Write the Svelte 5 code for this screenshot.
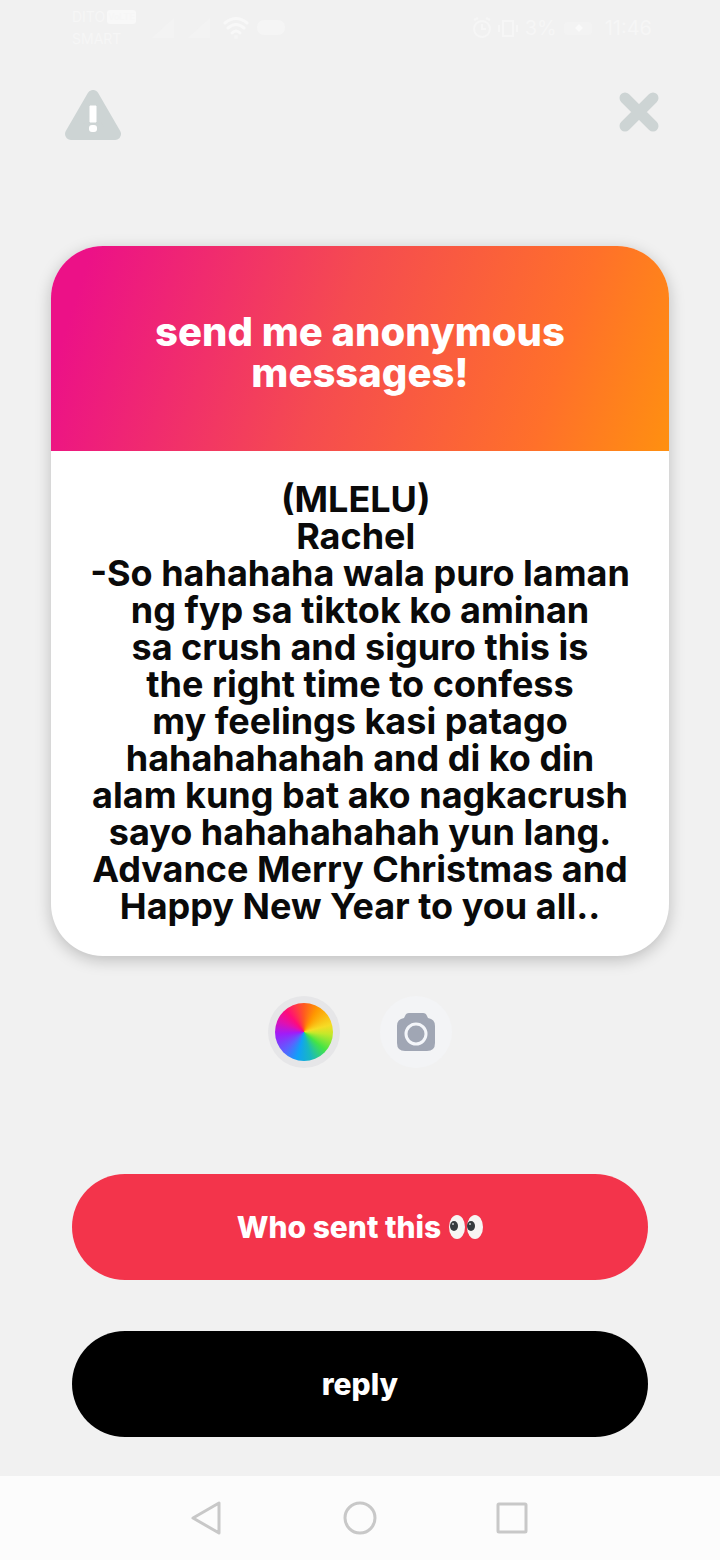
<script>
  const prompt = ['send me anonymous', 'messages!'];
  const message = [
    '(MLELU) ',
    'Rachel ',
    '-So hahahaha wala puro laman',
    'ng fyp sa tiktok ko aminan',
    'sa crush and siguro this is',
    'the right time to confess',
    'my feelings kasi patago',
    'hahahahahah and di ko din',
    'alam kung bat ako nagkacrush',
    'sayo hahahahahah yun lang.',
    'Advance Merry Christmas and',
    'Happy New Year to you all..'
  ];
</script>

<div class="screen">
  <div class="status">
    <div class="carrier">
      <div class="sim"><span>DITO</span><span class="volte">VoLTE</span></div>
      <span>SMART</span>
    </div>
    <svg class="signals" width="136" height="24" viewBox="0 0 136 24" fill="#f5f5f5" aria-hidden="true">
      <path d="M0 22 22 2v20zM36 22 58 2v20z" opacity=".5" />
      <g fill="none" stroke="#f8f8f8" stroke-width="3" stroke-linecap="round">
        <path d="M73 7q11-9 22 0M76 12q8-7 16 0M80 17q4-4 8 0" />
      </g>
      <circle cx="84" cy="21" r="2" />
      <rect x="105" y="4" width="28" height="15" rx="7" />
    </svg>
    <div class="right">
      <svg width="50" height="22" viewBox="0 0 50 22" fill="none" stroke="#f6f6f6" stroke-width="2" aria-hidden="true">
        <circle cx="11" cy="12" r="8" /><path d="M11 7v5h4M3 3l4-2M19 3l-4-2" />
        <path d="M32 4h10v15H32zM28 8v7M46 8v7" />
      </svg>
      <span>3%</span>
      <svg width="40" height="22" viewBox="0 0 40 22" fill="#f5f5f5" aria-hidden="true">
        <rect x="3" y="5" width="28" height="13" rx="3" opacity=".5" /><path d="m18 7 4 4-4 4-4-4z" fill="#fafafa" />
      </svg>
      <span>11:46</span>
    </div>
  </div>

  <header>
    <button class="icon" aria-label="Report">
      <svg width="56" height="50" viewBox="0 0 56 50">
        <path d="M28 6 50 44H6z" fill="#cdd4d4" stroke="#cdd4d4" stroke-width="12" stroke-linejoin="round" />
        <path d="M25 16h6v16h-6z" fill="#fff" stroke="#fff" stroke-linejoin="round" />
        <rect x="24" y="35" width="8" height="7" rx="3" fill="#fff" />
      </svg>
    </button>
    <button class="icon" aria-label="Close">
      <svg width="40" height="42" viewBox="0 0 40 42">
        <path d="M6 8 34 36M34 8 6 36" stroke="#cdd4d4" stroke-width="11" stroke-linecap="round" />
      </svg>
    </button>
  </header>

  <main>
    <article class="card">
      <h1>{#each prompt as line}<span>{line}</span>{/each}</h1>
      <p>{#each message as line}<span>{line}</span>{/each}</p>
    </article>

    <div class="tools">
      <button class="tool color" aria-label="Change colour"><span class="wheel"></span></button>
      <button class="tool camera" aria-label="Camera">
        <svg width="40" height="40" viewBox="0 0 40 40">
          <path d="M13 1h14q3 0 4 3l1 2q7 1 7 8v17q0 8-8 8H9q-8 0-8-8V14q0-7 7-8l1-2q1-3 4-3z" fill="#a0a6b4" />
          <circle cx="20" cy="22" r="10" fill="none" stroke="#f4f6fa" stroke-width="3" />
        </svg>
      </button>
    </div>

    <div class="actions">
      <button class="pill who">
        <span>Who sent this</span>
        <svg width="34" height="26" viewBox="0 0 34 26" role="img" aria-label="eyes">
          <ellipse cx="8" cy="13" rx="8" ry="12" fill="#f7f5f3" />
          <ellipse cx="26" cy="13" rx="8" ry="12" fill="#f7f5f3" />
          <ellipse cx="5" cy="12" rx="4" ry="5" fill="#373b3e" />
          <ellipse cx="22" cy="12" rx="4" ry="5" fill="#373b3e" />
          <circle cx="4" cy="10" r="1" fill="#c5c8ca" />
          <circle cx="21" cy="10" r="1" fill="#c5c8ca" />
        </svg>
      </button>
      <button class="pill reply">reply</button>
    </div>
  </main>

  <nav>
    <button class="icon" aria-label="Back">
      <svg width="34" height="34" viewBox="0 0 34 34"><path d="M28 2v30L2 17z" /></svg>
    </button>
    <button class="icon" aria-label="Home">
      <svg width="34" height="34" viewBox="0 0 34 34"><circle cx="17" cy="17" r="15" /></svg>
    </button>
    <button class="icon" aria-label="Recent apps">
      <svg width="34" height="34" viewBox="0 0 34 34"><rect x="3" y="3" width="28" height="28" rx="1" /></svg>
    </button>
  </nav>
</div>

<style>
  :global(body) {
    margin: 0;
    background: #f1f1f1;
  }
  .screen {
    min-height: 100vh;
    display: flex;
    flex-direction: column;
    font-family: Inter, 'Liberation Sans', sans-serif;
    background: #f1f1f1;
  }
  button {
    margin: 0;
    padding: 0;
    border: 0;
    font: inherit;
    cursor: pointer;
  }
  svg {
    display: block;
  }
  .status {
    display: flex;
    align-items: center;
    box-sizing: border-box;
    height: 56px;
    padding: 0 68px 0 72px;
    color: #f6f6f6;
  }
  .carrier {
    display: flex;
    flex-direction: column;
    gap: 4px;
    width: 80px;
    font-size: 14px;
    line-height: 18px;
  }
  .sim {
    display: flex;
    align-items: center;
    gap: 2px;
  }
  .volte {
    padding: 0 1px;
    border-radius: 3px;
    font-size: 9px;
    line-height: 14px;
    background: #f8f8f8;
  }
  .right {
    display: flex;
    align-items: center;
    gap: 4px;
    margin-left: auto;
    font-size: 20px;
  }
  header {
    display: flex;
    justify-content: space-between;
    align-items: flex-start;
    height: 156px;
    padding: 34px 61px 0 65px;
    box-sizing: border-box;
  }
  .icon {
    background: none;
  }
  main {
    flex: 1;
    padding: 34px 51px 39px;
  }
  .card {
    overflow: hidden;
    border-radius: 52px;
    background: #fff;
    box-shadow: 0 4px 16px rgba(0, 0, 0, 0.22);
    text-align: center;
  }
  h1 span,
  p span {
    display: block;
    white-space: pre;
  }
  h1 {
    margin: 0;
    padding: 65px 0 58px;
    background: linear-gradient(108deg, #ec1187 6%, #f54b50 46%, #ff702a 80%, #ff9010 100%);
    color: #fff;
    font-size: 40px;
    font-weight: 800;
    line-height: 41px;
  }
  p {
    margin: 0;
    padding: 30px 0 31px;
    color: #0a0a0a;
    font-size: 36px;
    font-weight: 700;
    line-height: 37px;
  }
  .tools {
    display: flex;
    justify-content: center;
    gap: 40px;
    margin-top: 40px;
  }
  .tool {
    display: grid;
    place-items: center;
    width: 72px;
    height: 72px;
    border-radius: 50%;
  }
  .color {
    background: #e6e6e8;
  }
  .camera {
    background: #f3f4f6;
  }
  .wheel {
    width: 58px;
    height: 58px;
    border-radius: 50%;
    background: conic-gradient(#ff5a20, #ff9800 30deg, #f6dc25 75deg, #c4e82a 95deg, #45e445 130deg, #18b8c0 165deg, #10a0f8 195deg, #5a62ff 225deg, #a01cf8 265deg, #e010b0 295deg, #ff0c78 320deg, #ff5a20);
  }
  .actions {
    display: flex;
    flex-direction: column;
    gap: 51px;
    margin: 106px 21px 0;
  }
  .pill {
    display: flex;
    justify-content: center;
    align-items: center;
    gap: 8px;
    height: 106px;
    border-radius: 53px;
    color: #fff;
    font-size: 30px;
    font-weight: 800;
  }
  .who {
    background: #f3344b;
  }
  .reply {
    background: #000;
  }
  nav {
    display: flex;
    justify-content: center;
    align-items: center;
    gap: 118px;
    height: 84px;
    background: #fcfcfc;
  }
  nav svg {
    fill: none;
    stroke: #c8c8c8;
    stroke-width: 3;
    stroke-linejoin: round;
  }
</style>
